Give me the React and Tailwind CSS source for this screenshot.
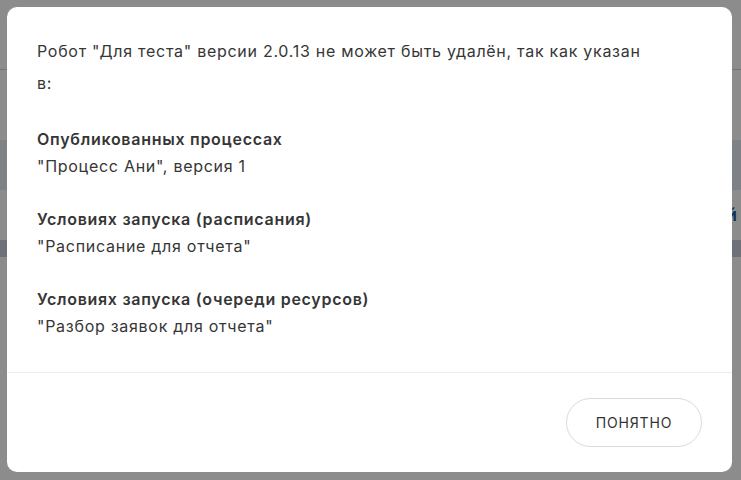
import React from 'react';

const usages = [
  { title: 'Опубликованных процессах', value: '"Процесс Ани", версия 1' },
  { title: 'Условиях запуска (расписания)', value: '"Расписание для отчета"' },
  { title: 'Условиях запуска (очереди ресурсов)', value: '"Разбор заявок для отчета"' }
];

const App = () => {
  return (
    <div className="relative w-[741px] h-[480px] overflow-hidden bg-white" style={{ fontFamily: 'Inter, "Noto Sans", sans-serif' }}>
      {/* page behind the overlay */}
      <div className="flex flex-col">
        <div className="h-[70px] border-b border-gray-300" />
        <div className="h-[70px]" />
        <div className="h-[50px] bg-[#e6ebf3]" />
        <div className="h-[50px] flex justify-end items-center pr-1 text-[#1d5fa8] text-lg font-semibold">й</div>
        <div className="h-[17px] bg-[#c9d0db]" />
      </div>

      {/* overlay */}
      <div className="absolute inset-0 bg-black/45 p-[7px] pr-[9px] pb-[8px]">
        <div className="h-full bg-white rounded-[10px] flex flex-col text-[#363636]">
          <div className="flex-1 px-[30px] pt-[28px] text-[16px] tracking-[0.045em]">
            <p className="leading-[32px]">
              Робот "Для теста" версии 2.0.13 не может быть удалён, так как указан
              <br />
              в:
            </p>
            <div className="mt-[27px] flex flex-col gap-[26px]">
              {usages.map((u) => (
                <div key={u.title} className="leading-[27px]">
                  <div className="font-semibold">{u.title}</div>
                  <div>{u.value}</div>
                </div>
              ))}
            </div>
          </div>
          <div className="border-t border-[#eeeeee] h-[100px] flex items-start justify-end pt-[25px] pr-[30px]">
            <button className="w-[136px] h-[49px] rounded-full border border-[#d5dae5] text-[14px] tracking-[0.06em] text-[#333] bg-white">
              ПОНЯТНО
            </button>
          </div>
        </div>
      </div>
    </div>
  );
};

export default App;
